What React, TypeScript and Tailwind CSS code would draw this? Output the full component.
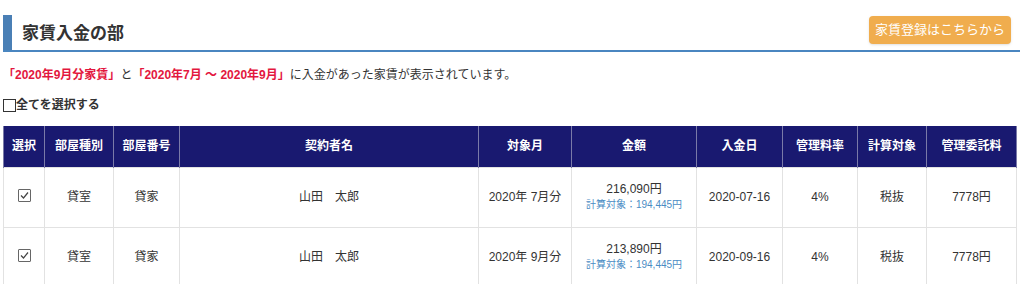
import React from "react";

const cols = [
  { label: "選択", w: "w-[41px]" },
  { label: "部屋種別", w: "w-[69px]" },
  { label: "部屋番号", w: "w-[66px]" },
  { label: "契約者名", w: "w-[299px]" },
  { label: "対象月", w: "w-[93px]" },
  { label: "金額", w: "w-[125px]" },
  { label: "入金日", w: "w-[86px]" },
  { label: "管理料率", w: "w-[75px]" },
  { label: "計算対象", w: "w-[69px]" },
  { label: "管理委託料", w: "w-[90px]" },
];

const rows = [
  { month: "2020年 7月分", amount: "216,090円", calc: "194,445円", date: "2020-07-16" },
  { month: "2020年 9月分", amount: "213,890円", calc: "194,445円", date: "2020-09-16" },
];

function CheckBox({ checked }: { checked?: boolean }) {
  return (
    <span className="inline-flex items-center justify-center w-[13px] h-[13px] border border-[#666] bg-white rounded-[1px]">
      {checked && (
        <svg width="11" height="11" viewBox="0 0 11 11">
          <path d="M2 5.5 L4.5 8 L9 2.5" fill="none" stroke="#444" strokeWidth="1.2" />
        </svg>
      )}
    </span>
  );
}

export default function App() {
  return (
    <main className="w-[1024px] h-[284px] overflow-hidden bg-white text-[#333] font-['Liberation_Sans','Noto_Sans_CJK_JP',sans-serif]">
      {/* heading */}
      <div className="flex items-end justify-between ml-[3px] mr-[4px] pt-[15px] border-b-2 border-[#4a86c0]">
        <div className="flex items-stretch h-[35px]">
          <div className="w-[9px] bg-[#4a7fb5]" />
          <h1 className="pl-[10px] pt-[6px] text-[17px] font-bold text-[#333]">家賃入金の部</h1>
        </div>
        <button className="mb-[6px] mr-[9px] w-[142px] h-[28px] rounded-[4px] bg-[#f0ad4e] text-white text-[13px] font-normal shadow-sm">
          家賃登録はこちらから
        </button>
      </div>

      {/* notice */}
      <p className="mt-[14px] ml-[3px] text-[12px] leading-[18px] text-[#333]">
        <span className="font-bold text-[#e3173e]">「2020年9月分家賃」</span>と
        <span className="font-bold text-[#e3173e]">「2020年7月 ～ 2020年9月」</span>に入金があった家賃が表示されています。
      </p>

      {/* select all */}
      <label className="mt-[12px] ml-[3px] flex items-center text-[12px] font-bold text-[#333]">
        <span className="inline-block w-[13px] h-[13px] border border-[#333] bg-white" />
        全てを選択する
      </label>

      {/* table */}
      <table className="mt-[12px] ml-[3px] w-[1013px] table-fixed border-collapse text-[12px]">
        <thead>
          <tr className="h-[41px] bg-[#191970] text-white">
            {cols.map((c) => (
              <th key={c.label} className={`${c.w} border-x border-[#7a7aa8] font-bold`}>
                {c.label}
              </th>
            ))}
          </tr>
        </thead>
        <tbody>
          {rows.map((r, i) => (
            <tr key={i} className="h-[60px] text-center text-[#333]">
              <td className="border border-[#e2e2e2]">
                <CheckBox checked />
              </td>
              <td className="border border-[#e2e2e2]">貸室</td>
              <td className="border border-[#e2e2e2]">貸家</td>
              <td className="border border-[#e2e2e2]">山田　太郎</td>
              <td className="border border-[#e2e2e2]">{r.month}</td>
              <td className="border border-[#e2e2e2] leading-[16px]">
                <div>{r.amount}</div>
                <div className="text-[10px] text-[#4a8cc4]">計算対象：{r.calc}</div>
              </td>
              <td className="border border-[#e2e2e2]">{r.date}</td>
              <td className="border border-[#e2e2e2]">4%</td>
              <td className="border border-[#e2e2e2]">税抜</td>
              <td className="border border-[#e2e2e2]">7778円</td>
            </tr>
          ))}
        </tbody>
      </table>
    </main>
  );
}
